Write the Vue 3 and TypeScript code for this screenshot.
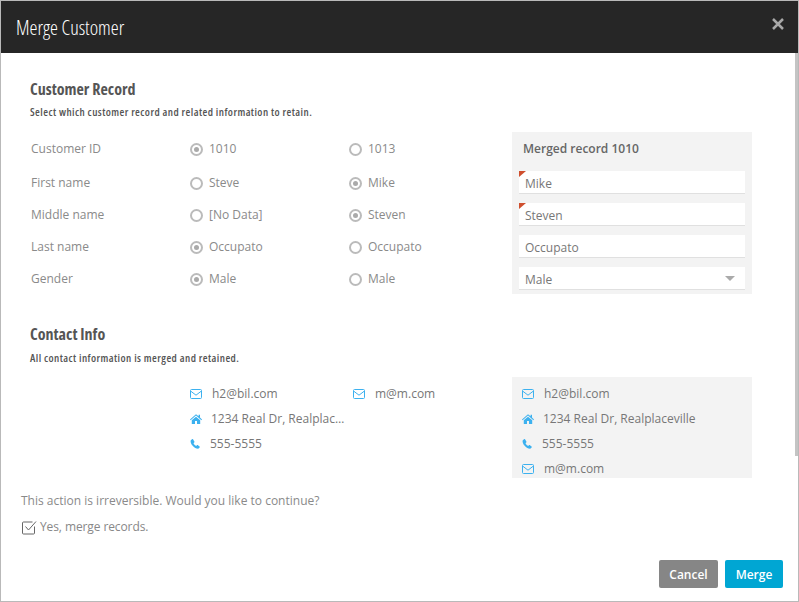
<script setup lang="ts">
type ContactKind = 'mail' | 'home' | 'phone'

interface RecordRow {
  label: string
  left: string
  right: string
  picked: 'left' | 'right'
}

interface Contact {
  kind: ContactKind
  text: string
}

const rows: RecordRow[] = [
  { label: 'First name', left: 'Steve', right: 'Mike', picked: 'right' },
  { label: 'Middle name', left: '[No Data]', right: 'Steven', picked: 'right' },
  { label: 'Last name', left: 'Occupato', right: 'Occupato', picked: 'left' },
  { label: 'Gender', left: 'Male', right: 'Male', picked: 'left' }
]

const leftContacts: Contact[] = [
  { kind: 'mail', text: 'h2@bil.com' },
  { kind: 'home', text: '1234 Real Dr, Realplaceville' },
  { kind: 'phone', text: '555-5555' }
]

const rightContacts: Contact[] = [{ kind: 'mail', text: 'm@m.com' }]

const mergedContacts: Contact[] = [...leftContacts, ...rightContacts]

const mergedFields = [
  { value: 'Mike', changed: true },
  { value: 'Steven', changed: true },
  { value: 'Occupato', changed: false }
]

const homePath = 'M6 1.2 0 6.4l.6.8L6 2.6l5.4 4.6.6-.8-2-1.8V1.8H8.6v1.5zM1.8 7.2V11H5V8h2v3h3.2V7.2L6 3.8z'
const phonePath = 'M2.6.6.8 1.8c-.6 1.8.4 4.3 2.1 6.2 1.8 2 4.2 3.5 6.1 3.3l1.7-1.7c.2-.2.2-.5 0-.7L8.4 7.1c-.2-.1-.5-.1-.7.1l-.9 1C5.8 7.7 4.3 6.2 3.8 5.1l1-.9c.2-.2.2-.5.1-.7L3.3.7C3.1.5 2.8.4 2.6.6z'
</script>

<template>
  <div class="dialog">
    <header class="title-bar">
      <h1>Merge Customer</h1>
      <svg class="close" viewBox="0 0 14 14">
        <path d="M2 2l10 10M12 2 2 12" fill="none" stroke="#a8a8a8" stroke-width="2.5" />
      </svg>
    </header>

    <main class="content">
      <section class="record">
        <h2>Customer Record</h2>
        <p class="hint">Select which customer record and related information to retain.</p>
        <div class="record-grid">
          <div class="choices">
            <div class="choice-row id-row">
              <span class="label">Customer ID</span>
              <label class="option"><i class="radio on"></i>1010</label>
              <label class="option"><i class="radio"></i>1013</label>
            </div>
            <div v-for="row in rows" :key="row.label" class="choice-row">
              <span class="label">{{ row.label }}</span>
              <label class="option"><i class="radio" :class="{ on: row.picked === 'left' }"></i>{{ row.left }}</label>
              <label class="option"><i class="radio" :class="{ on: row.picked === 'right' }"></i>{{ row.right }}</label>
            </div>
          </div>
          <div class="merged">
            <div class="merged-title">Merged record 1010</div>
            <div v-for="field in mergedFields" :key="field.value" class="field" :class="{ changed: field.changed }">{{ field.value }}</div>
            <div class="field select">Male<i class="caret"></i></div>
          </div>
        </div>
      </section>

      <section class="contact">
        <h2>Contact Info</h2>
        <p class="hint">All contact information is merged and retained.</p>
        <div class="contact-grid">
          <ul v-for="(list, i) in [leftContacts, rightContacts, mergedContacts]" :key="i" class="contact-list" :class="{ first: i === 0, 'merged-contacts': i === 2 }">
            <li v-for="item in list" :key="item.text" :class="item.kind">
              <svg class="icon" viewBox="0 0 12 12">
                <g v-if="item.kind === 'mail'" fill="none" stroke="currentColor">
                  <rect x="0.5" y="1.5" width="11" height="9" rx="1" />
                  <path d="M0.8 3.2 6 7.2l5.2-4" />
                </g>
                <path v-else-if="item.kind === 'home'" fill="currentColor" :d="homePath" />
                <path v-else fill="currentColor" :d="phonePath" />
              </svg>
              <span class="text">{{ item.text }}</span>
            </li>
          </ul>
        </div>
      </section>
      <div class="scrollbar"></div>
    </main>

    <section class="confirm">
      <p>This action is irreversible. Would you like to continue?</p>
      <label class="check">
        <svg viewBox="0 0 15 15" class="check-box">
          <path fill="none" stroke="#666" d="M12.5 6.5V13a1 1 0 0 1-1 1h-10a1 1 0 0 1-1-1V3a1 1 0 0 1 1-1h9" />
          <path fill="none" stroke="#666" d="M3.5 6.5 6.5 10 14 1.5" />
        </svg>
        Yes, merge records.
      </label>
    </section>

    <footer class="actions">
      <button class="cancel">Cancel</button>
      <button class="merge">Merge</button>
    </footer>
  </div>
</template>

<style>
html,
body {
  margin: 0;
  background: #fff;
}
</style>

<style scoped>
.dialog {
  box-sizing: border-box;
  width: 799px;
  height: 602px;
  border: 1px solid #b9b9b9;
  display: flex;
  flex-direction: column;
  background: #fff;
  font-family: "Open Sans", "Liberation Sans", sans-serif;
  font-size: 12px;
  color: #8a8a8a;
}

.title-bar {
  flex: 0 0 52px;
  background: #262626;
  display: flex;
  align-items: center;
  justify-content: space-between;
  padding: 0 13px 0 15px;
}

.title-bar h1 {
  margin: 0;
  color: #fff;
  font-size: 20px;
  font-weight: 300;
  font-stretch: 75%;
}

.close {
  width: 14px;
  height: 14px;
  margin-top: -7px;
}

.content {
  position: relative;
  flex: 0 0 425px;
  overflow: hidden;
  padding: 25px 0 0 29px;
  box-sizing: border-box;
}

h2 {
  margin: 0;
  color: #555;
  font-size: 16px;
  line-height: 22px;
  font-weight: 700;
  font-stretch: 75%;
}

.hint {
  margin: 5px 0 0;
  color: #555;
  font-size: 11px;
  line-height: 14px;
  font-weight: 600;
  font-stretch: 75%;
  letter-spacing: 0.43px;
}

.record-grid {
  display: flex;
  margin-top: 13px;
}

.choices {
  width: 481px;
  flex: none;
}

.choice-row {
  display: grid;
  grid-template-columns: 159px 159px 1fr;
  height: 32px;
  align-items: center;
  padding-left: 1px;
  box-sizing: border-box;
  line-height: 18px;
}

.id-row {
  height: 34px;
  margin-bottom: 1px;
}

.option {
  display: flex;
  align-items: center;
  gap: 6px;
}

.radio {
  box-sizing: border-box;
  width: 13px;
  height: 13px;
  border: 2px solid #bbb;
  border-radius: 50%;
  display: block;
  position: relative;
}

.radio.on::after {
  content: "";
  position: absolute;
  left: 2px;
  top: 2px;
  width: 5px;
  height: 5px;
  border-radius: 50%;
  background: #aaa;
}

.merged {
  width: 240px;
  height: 162px;
  background: #f3f3f3;
  box-sizing: border-box;
  padding: 0 7px;
  flex: none;
  margin-left: 1px;
}

.merged-title {
  height: 39px;
  line-height: 33px;
  padding-left: 4px;
  font-weight: 600;
  color: #666;
  box-sizing: border-box;
}

.field {
  position: relative;
  box-sizing: border-box;
  height: 23px;
  margin-bottom: 9px;
  background: #fff;
  border-bottom: 1px solid #e0e0e0;
  padding: 4px 6px 0;
  line-height: 18px;
  color: #777;
}

.field.changed::before {
  content: "";
  position: absolute;
  left: 0;
  top: 0;
  border-style: solid;
  border-width: 6px 7px 0 0;
  border-color: #cf4f2e transparent transparent transparent;
}

.select {
  display: flex;
  justify-content: space-between;
  margin-bottom: 0;
}

.caret {
  align-self: center;
  margin-right: 4px;
  margin-top: -4px;
  border-style: solid;
  border-width: 5px 5.5px 0;
  border-color: #aaa transparent transparent;
}

.contact {
  margin-top: 28px;
}

.contact .hint {
  margin-top: 6px;
}

.contact-grid {
  display: grid;
  grid-template-columns: 163px 159px 240px;
  margin: 12px 0 0 160px;
}

.contact-list {
  list-style: none;
  margin: 0;
  padding: 4px 0 0;
}

.contact-list li {
  display: flex;
  align-items: center;
  height: 25px;
  color: #777;
  white-space: nowrap;
}

.merged-contacts {
  background: #f3f3f3;
  padding-left: 10px;
  height: 101px;
  box-sizing: border-box;
}

.icon {
  width: 12px;
  height: 12px;
  color: #3cb1ef;
  flex: none;
  margin-right: 10px;
}

.home .icon {
  margin-right: 9px;
}

.phone .icon {
  width: 11px;
  height: 12px;
  margin-right: 9px;
}

.first .text {
  max-width: 134px;
  overflow: hidden;
  text-overflow: ellipsis;
}

.scrollbar {
  position: absolute;
  right: 0;
  top: 0;
  width: 3px;
  height: 403px;
  background: #c4c4c4;
}

.confirm {
  padding: 14px 0 0 20px;
  line-height: 18px;
}

.confirm p {
  margin: 0;
}

.check {
  display: flex;
  align-items: center;
  gap: 3px;
  margin-top: 8px;
  color: #888;
  letter-spacing: -0.1px;
}

.check-box {
  width: 15px;
  height: 15px;
  margin-left: 1px;
}

.actions {
  margin-top: auto;
  display: flex;
  justify-content: flex-end;
  gap: 7px;
  padding: 0 15px 13px 0;
}

button {
  height: 28px;
  border: 0;
  border-radius: 2px;
  padding: 0;
  color: #fff;
  font: 600 12px "Open Sans", "Liberation Sans", sans-serif;
}

.cancel {
  width: 59px;
  background: #868686;
}

.merge {
  width: 58px;
  background: #00a6d3;
}
</style>
